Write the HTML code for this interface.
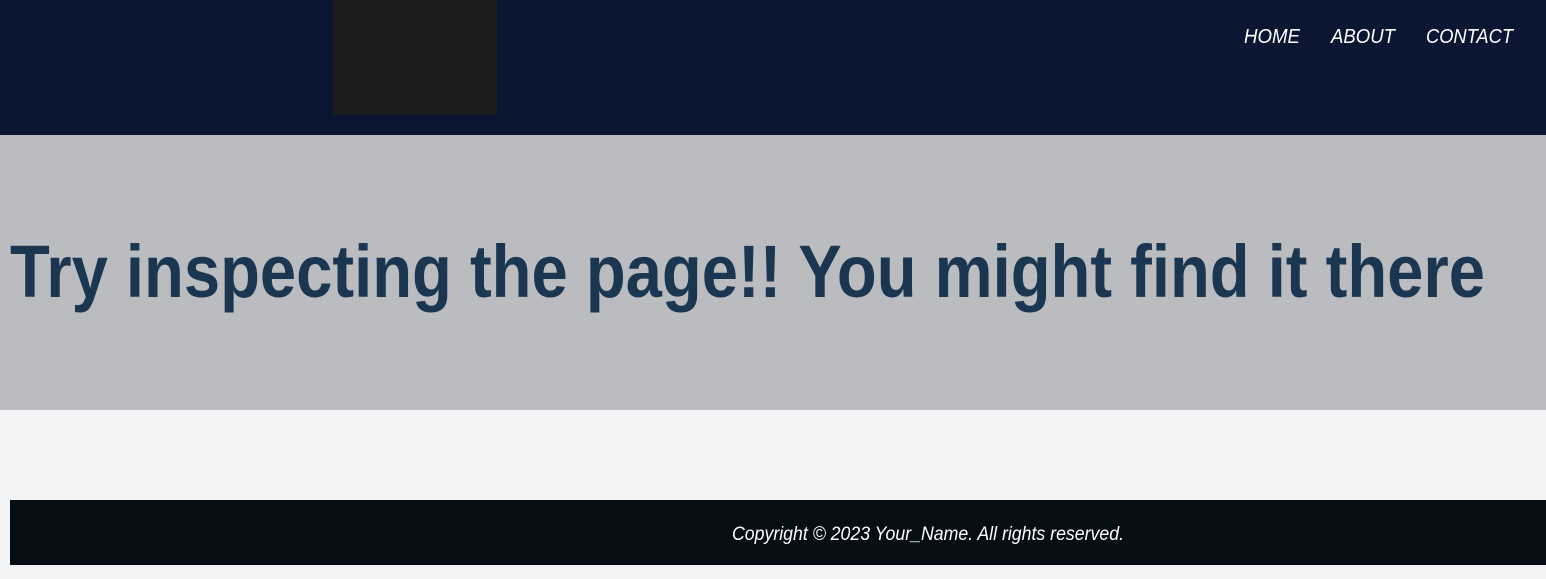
<!DOCTYPE html>
<html><head><style>
body{margin:0;width:1546px;height:579px;background:#f2f3f5;overflow:hidden;font-family:"Liberation Sans",sans-serif;position:relative}
.hdr{position:absolute;left:0;top:0;width:1546px;height:135px;background:#0b1633}
.img{position:absolute;left:333px;top:0;width:164px;height:115px;background:#1d1d1f}
.hero{position:absolute;left:0;top:135px;width:1546px;height:275px;background:#bbbcc0}
.ft{position:absolute;left:10px;top:500px;width:1536px;height:65px;background:#070d15}
svg{position:absolute;left:0;top:0}
</style></head><body>
<div class="hdr"><div class="img"></div></div>
<div class="hero"></div>
<div class="ft"></div>
<svg width="1546" height="579">
<g font-style="italic" fill="#fff" font-size="20">
<text x="1244" y="43" textLength="56" lengthAdjust="spacingAndGlyphs">HOME</text>
<text x="1331" y="43" textLength="64" lengthAdjust="spacingAndGlyphs">ABOUT</text>
<text x="1426" y="43" textLength="87" lengthAdjust="spacingAndGlyphs">CONTACT</text>
</g>
<text x="10" y="297" font-size="74" font-weight="bold" fill="#1a3650" textLength="1475" lengthAdjust="spacingAndGlyphs">Try inspecting the page!! You might find it there</text>
<text x="732" y="540" font-size="19" font-style="italic" fill="#fff" textLength="392" lengthAdjust="spacingAndGlyphs">Copyright © 2023 Your_Name. All rights reserved.</text>
</svg>
</body></html>
